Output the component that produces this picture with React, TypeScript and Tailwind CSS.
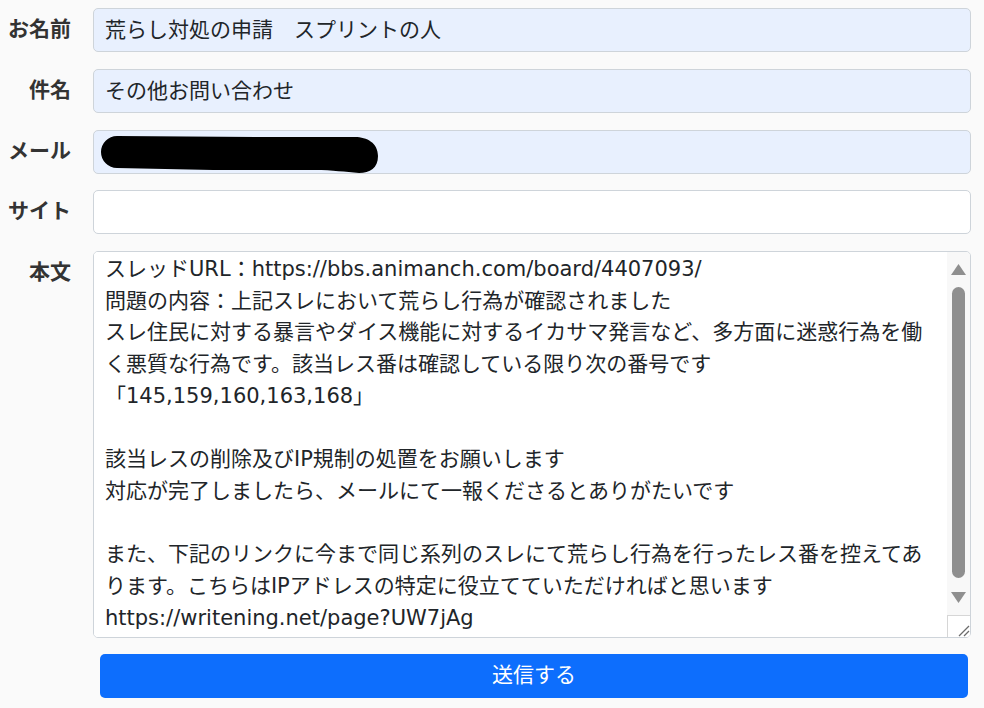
import React from 'react';

const font = "font-['DejaVu_Sans','Noto_Sans_CJK_JP',sans-serif]";

const body = [
  'スレッドURL：https://bbs.animanch.com/board/4407093/',
  '問題の内容：上記スレにおいて荒らし行為が確認されました',
  'スレ住民に対する暴言やダイス機能に対するイカサマ発言など、多方面に迷惑行為を働',
  'く悪質な行為です。該当レス番は確認している限り次の番号です',
  '「145,159,160,163,168」',
  '',
  '該当レスの削除及びIP規制の処置をお願いします',
  '対応が完了しましたら、メールにて一報くださるとありがたいです',
  '',
  'また、下記のリンクに今まで同じ系列のスレにて荒らし行為を行ったレス番を控えてあ',
  'ります。こちらはIPアドレスの特定に役立てていただければと思います',
  'https://writening.net/page?UW7jAg',
  '',
].join('\n');

const Label = ({ children }: { children: React.ReactNode }) => (
  <label className="w-[93px] shrink-0 pr-[22px] pt-[6px] text-right text-[21px] leading-[31.5px] font-bold text-[#333]">
    {children}
  </label>
);

const Field = ({
  value,
  filled = true,
  children,
}: {
  value: string;
  filled?: boolean;
  children?: React.ReactNode;
}) => (
  <div className="relative flex-1">
    <input
      readOnly
      value={value}
      className={
        'block h-[44px] w-full rounded-[5px] border border-[#ced4da] px-[11px] pb-[4px] text-[21px] leading-[31.5px] text-[#212529] outline-none ' +
        (filled ? 'bg-[#e8f0fe]' : 'bg-white')
      }
    />
    {children}
  </div>
);

const Blob = () => (
  <svg className="absolute left-0 top-0" width="300" height="48" viewBox="0 0 300 48">
    <path
      d="M24 6 L170 7 L262 7 C274 7 285 13 285 26 C285 38 277 43 266 43 C252 42 240 40 222 40 L120 40 L24 38 A16 16 0 0 1 24 6 Z"
      fill="#000"
    />
  </svg>
);

const Scrollbar = () => (
  <div className="flex w-[23px] shrink-0 flex-col items-center bg-[#f8f8f8]">
    <svg className="mt-[12px]" width="15" height="11" viewBox="0 0 15 11">
      <polygon points="7.5,0 15,11 0,11" fill="#8f8f8f" />
    </svg>
    <div className="mt-[12px] h-[291px] w-[13px] rounded-[7px] bg-[#8f8f8f]" />
    <svg className="mt-[14px]" width="15" height="11" viewBox="0 0 15 11">
      <polygon points="0,0 15,0 7.5,11" fill="#8f8f8f" />
    </svg>
    <div className="flex-1" />
    <div className="relative h-[22px] w-full border-l border-t border-[#d6d6d6] bg-white">
      <svg className="absolute bottom-0 right-0" width="14" height="14" viewBox="0 0 14 14">
        <line x1="3" y1="13" x2="13" y2="3" stroke="#6b6b6b" strokeWidth="1.3" />
        <line x1="8" y1="13" x2="13" y2="8" stroke="#6b6b6b" strokeWidth="1.3" />
      </svg>
    </div>
  </div>
);

export default function App() {
  return (
    <div className={`${font} min-h-screen bg-[#fafafa] pr-[13px] pt-[8px]`}>
      <div className="flex flex-col gap-[16.75px]">
        <div className="flex items-start">
          <Label>お名前</Label>
          <Field value="荒らし対処の申請　スプリントの人" />
        </div>
        <div className="flex items-start">
          <Label>件名</Label>
          <Field value="その他お問い合わせ" />
        </div>
        <div className="flex items-start">
          <Label>メール</Label>
          <Field value="">
            <Blob />
          </Field>
        </div>
        <div className="flex items-start">
          <Label>サイト</Label>
          <Field value="" filled={false} />
        </div>
        <div className="flex items-start">
          <Label>本文</Label>
          <div className="flex h-[387px] flex-1 overflow-hidden rounded-[5px] border border-[#ced4da] bg-white">
            <textarea
              readOnly
              value={body}
              wrap="off"
              className="h-full flex-1 resize-none overflow-hidden bg-white pl-[11px] pt-[2px] text-[21px] leading-[31.7px] text-[#212529] outline-none"
            />
            <Scrollbar />
          </div>
        </div>
      </div>
      <div className="mt-[16px] pl-[100px] pr-[3px]">
        <button className="h-[44px] w-full rounded-[5px] bg-[#0d6efd] text-[21px] text-white">
          送信する
        </button>
      </div>
    </div>
  );
}
